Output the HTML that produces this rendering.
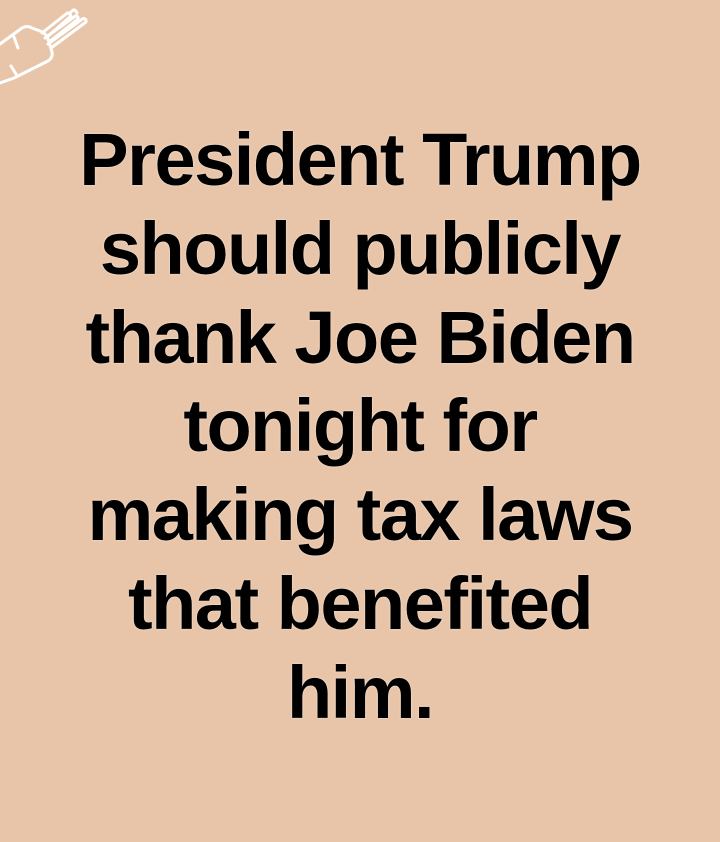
<!DOCTYPE html>
<html><head><style>
html,body{margin:0;padding:0;}
body{width:720px;height:842px;background:#e8c5a9;position:relative;overflow:hidden;}
.t{position:absolute;left:0;top:116px;width:720px;text-align:center;font-family:"Liberation Sans",sans-serif;font-weight:bold;font-size:74px;line-height:88.8px;letter-spacing:-1.5px;color:#000;text-shadow:0 0 2px rgba(255,255,255,0.6);}
</style></head><body>
<svg width="100" height="90" style="position:absolute;left:0;top:0" fill="none" stroke="#fff" stroke-width="3" stroke-linecap="round" stroke-linejoin="round">
<path d="M0 44 L22 28 Q27 25 32 28 L40 31 Q46 33 48 39 L52 52 Q53 58 48 61 L14 78 L0 83"/>
<path d="M14 37 L18 48"/>
<path d="M11 66 L16 74"/>
<path d="M42 33 L66 14 Q68 12 70 14 L71 16 L47 37"/>
<path d="M45 38 L74 17 Q76 15 78 17 L78 19 L49 42"/>
<path d="M48 44 L81 20 Q84 17 86 20 L86 22 L51 48"/>
<path d="M69 14 L72 11 Q74 9 76 11 L77 13"/>
</svg>
<div class="t">President Trump<br>should publicly<br>thank Joe Biden<br>tonight for<br>making tax laws<br>that benefited<br>him.</div>
</body></html>
